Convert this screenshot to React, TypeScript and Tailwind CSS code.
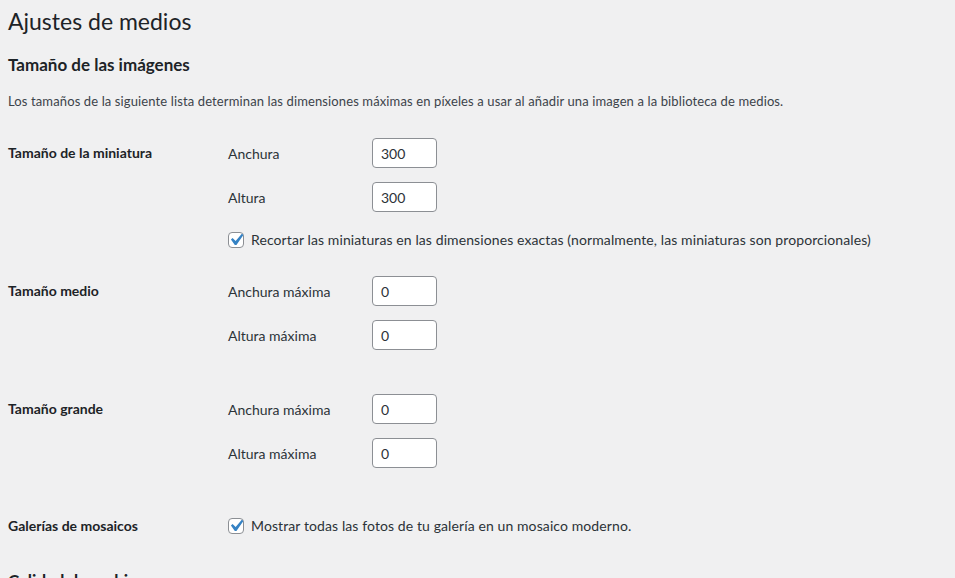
import React from "react";

const font = { fontFamily: "Lato, 'Noto Sans', sans-serif" };

function Check() {
    return (
        <span className="relative inline-flex w-4 h-4 shrink-0 rounded-[4px] border border-[#8c8f94] bg-white">
            <svg viewBox="0 0 20 20" className="absolute -left-[5px] -top-[5px] w-[24px] h-[24px]">
                <path d="M14.83 4.89l1.34.94-5.81 8.38H9.02L5.78 9.67l1.34-1.25 2.57 2.4z" fill="#3582c4" />
            </svg>
        </span>
    );
}

function SizeInput({ value }: { value: string }) {
    return (
        <div className="w-[65px] h-[30px] rounded-[4px] border border-[#8c8f94] bg-white px-2 flex items-center text-[14px] text-[#2c3338]">
            {value}
        </div>
    );
}

function Field({ label, value }: { label: string; value: string }) {
    return (
        <div className="flex items-center h-[30px]">
            <span className="w-[144px] text-[14px] text-[#2c3338]">{label}</span>
            <SizeInput value={value} />
        </div>
    );
}

function Row({ title, children, className }: { title: string; children: React.ReactNode; className?: string }) {
    return (
        <div className={"flex " + (className ?? "")}>
            <div className="w-[220px] shrink-0 pt-[21px] text-[14px] font-bold leading-[18px] text-[#1d2327]">{title}</div>
            <div className="pt-[15px] flex flex-col gap-[14px]">{children}</div>
        </div>
    );
}

function CheckLine({ text }: { text: string }) {
    return (
        <label className="flex items-center gap-[7px] text-[14px] tracking-[0.1px] text-[#2c3338]">
            <Check />
            <span>{text}</span>
        </label>
    );
}

export default function App() {
    return (
        <div className="h-screen bg-[#f0f0f1] pl-2 overflow-hidden" style={font}>
            <h1 className="text-[23px] font-normal leading-[30px] text-[#1d2327] pt-[6px]">Ajustes de medios</h1>
            <h2 className="mt-[18px] text-[17px] font-bold leading-[22px] text-[#1d2327]">Tamaño de las imágenes</h2>
            <p className="mt-[16px] text-[13px] leading-[18px] tracking-[0.12px] text-[#3c434a]">
                Los tamaños de la siguiente lista determinan las dimensiones máximas en píxeles a usar al añadir una imagen a la biblioteca de medios.
            </p>

            <Row title="Tamaño de la miniatura" className="mt-[13px] h-[138px]">
                <Field label="Anchura" value="300" />
                <Field label="Altura" value="300" />
                <div className="mt-[3px]">
                    <CheckLine text="Recortar las miniaturas en las dimensiones exactas (normalmente, las miniaturas son proporcionales)" />
                </div>
            </Row>

            <Row title="Tamaño medio" className="h-[118px]">
                <Field label="Anchura máxima" value="0" />
                <Field label="Altura máxima" value="0" />
            </Row>

            <Row title="Tamaño grande" className="h-[118px]">
                <Field label="Anchura máxima" value="0" />
                <Field label="Altura máxima" value="0" />
            </Row>

            <div className="flex mt-[18px] items-center">
                <div className="w-[220px] shrink-0 text-[14px] font-bold leading-[18px] text-[#1d2327]">Galerías de mosaicos</div>
                <CheckLine text="Mostrar todas las fotos de tu galería en un mosaico moderno." />
            </div>

            <h2 className="mt-[34px] text-[17px] font-bold leading-[22px] text-[#1d2327]">Calidad de archivo</h2>
        </div>
    );
}
